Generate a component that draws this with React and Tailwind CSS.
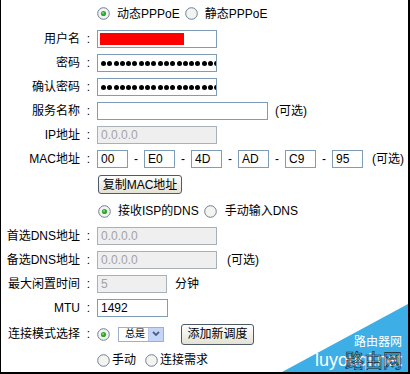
import React from "react";

function Radio({ checked }) {
  return (
    <svg width="13" height="13" viewBox="0 0 13 13" className="shrink-0">
      <circle cx="6.5" cy="6.5" r="5.8" fill="#f3f3ef" stroke="#6b8196" strokeWidth="1" />
      {checked && <circle cx="6.5" cy="6.5" r="2.6" fill="#2fa82f" />}
      {checked && <circle cx="6" cy="6" r="1" fill="#7fd67f" />}
    </svg>
  );
}

function Label({ text }) {
  return (
    <>
      <span className="w-[79px] text-right whitespace-nowrap">{text}</span>
      <span className="w-[17px] text-center">:</span>
    </>
  );
}

function Box({ w, value, disabled }) {
  return (
    <div
      className={
        "h-[18px] border flex items-center px-[3px] text-[12px] overflow-hidden " +
        (disabled
          ? "bg-[#efefef] border-[#a9b1b8] text-[#a3a3a3]"
          : "bg-white border-[#7f9db9] text-black")
      }
      style={{ width: w }}
    >
      {value}
    </div>
  );
}

function Dots() {
  return (
    <div className="w-[120px] h-[18px] border border-[#7f9db9] bg-white flex items-center gap-[1.3px] pl-[3px] overflow-hidden">
      {Array.from({ length: 20 }).map((_, i) => (
        <span key={i} className="w-[5px] h-[5px] rounded-full bg-black shrink-0" />
      ))}
    </div>
  );
}

function XpButton({ children, w, h }) {
  return (
    <div
      className="flex items-center justify-center border border-[#4d5b68] rounded-[3px] bg-gradient-to-b from-white to-[#e4e1d4] text-[12px] whitespace-nowrap"
      style={{ width: w, height: h }}
    >
      {children}
    </div>
  );
}

export default function App() {
  return (
    <div
      className="relative w-[410px] h-[374px] bg-white border-l border-r-2 border-b-2 border-black overflow-hidden text-[12px] text-black"
      style={{ fontFamily: "'Liberation Sans', 'Noto Sans CJK SC', sans-serif" }}
    >
      <div className="flex items-center h-[27px] pl-[96px]">
        <Radio checked />
        <span className="ml-[7px]">动态PPPoE</span>
        <span className="ml-[5px]"><Radio /></span>
        <span className="ml-[7px]">静态PPPoE</span>
      </div>

      <div className="flex items-center h-[24px]">
        <Label text="用户名" />
        <div className="w-[120px] h-[18px] border border-[#7f9db9] bg-white p-[2px]">
          <div className="w-[84px] h-full bg-[#ff0000]" />
        </div>
      </div>

      <div className="flex items-center h-[24px]">
        <Label text="密码" />
        <Dots />
      </div>

      <div className="flex items-center h-[24px]">
        <Label text="确认密码" />
        <Dots />
      </div>

      <div className="flex items-center h-[24px]">
        <Label text="服务名称" />
        <Box w={171} value="" />
        <span className="ml-[7px]">(可选)</span>
      </div>

      <div className="flex items-center h-[24px]">
        <Label text="IP地址" />
        <Box w={120} value="0.0.0.0" disabled />
      </div>

      <div className="flex items-center h-[24px]">
        <Label text="MAC地址" />
        <Box w={31} value="00" />
        <span className="w-[16px] text-center">-</span>
        <Box w={31} value="E0" />
        <span className="w-[16px] text-center">-</span>
        <Box w={31} value="4D" />
        <span className="w-[16px] text-center">-</span>
        <Box w={31} value="AD" />
        <span className="w-[16px] text-center">-</span>
        <Box w={31} value="C9" />
        <span className="w-[16px] text-center">-</span>
        <Box w={31} value="95" />
        <span className="ml-[9px]">(可选)</span>
      </div>

      <div className="flex items-center h-[27px] pl-[97px]">
        <XpButton w={84} h={19}>复制MAC地址</XpButton>
      </div>

      <div className="flex items-center h-[26px] pl-[97px]">
        <Radio checked />
        <span className="ml-[7px]">接收ISP的DNS</span>
        <span className="ml-[5px]"><Radio /></span>
        <span className="ml-[8px]">手动输入DNS</span>
      </div>

      <div className="flex items-center h-[24px]">
        <Label text="首选DNS地址" />
        <Box w={120} value="0.0.0.0" disabled />
      </div>

      <div className="flex items-center h-[24px]">
        <Label text="备选DNS地址" />
        <Box w={120} value="0.0.0.0" disabled />
        <span className="ml-[10px]">(可选)</span>
      </div>

      <div className="flex items-center h-[24px]">
        <Label text="最大闲置时间" />
        <Box w={70} value="5" disabled />
        <span className="ml-[8px]">分钟</span>
      </div>

      <div className="flex items-center h-[24px]">
        <Label text="MTU" />
        <Box w={71} value="1492" />
      </div>

      <div className="flex items-center h-[28px]">
        <Label text="连接模式选择" />
        <Radio checked />
        <div className="ml-[8px] w-[46px] h-[15px] border border-[#9db0c6] bg-white flex items-center">
          <span className="flex-1 pl-[6px] text-[10px] leading-none">总是</span>
          <div className="w-[15px] h-[13px] bg-[#c4d5f8] border-l border-[#b6c8ee] flex items-center justify-center">
            <svg width="8" height="6" viewBox="0 0 8 6">
              <path d="M1 1 L4 4 L7 1" fill="none" stroke="#4d6185" strokeWidth="1.8" />
            </svg>
          </div>
        </div>
        <span className="ml-[17px]">
          <XpButton w={73} h={21}>添加新调度</XpButton>
        </span>
      </div>

      <div className="flex items-center h-[24px] pl-[96px]">
        <Radio />
        <span className="ml-[2px]">手动</span>
        <span className="ml-[9px]"><Radio /></span>
        <span className="ml-[2px]">连接需求</span>
      </div>

      <svg className="absolute right-0 bottom-0" width="126" height="68" viewBox="0 0 126 68">
        <polygon points="0,68 126,68 126,0" fill="#3eaee6" />
      </svg>
      <div className="absolute right-[6px] bottom-[24px] text-white text-[12px] leading-none">路由器网</div>
      <div className="absolute right-[6px] bottom-[3px] text-white text-[18px] leading-none">luyouqi.net</div>
      <div className="absolute right-[6px] bottom-[1px] text-transparent text-[19px] leading-none [-webkit-text-stroke:0.6px_#222]">路由网</div>
    </div>
  );
}
